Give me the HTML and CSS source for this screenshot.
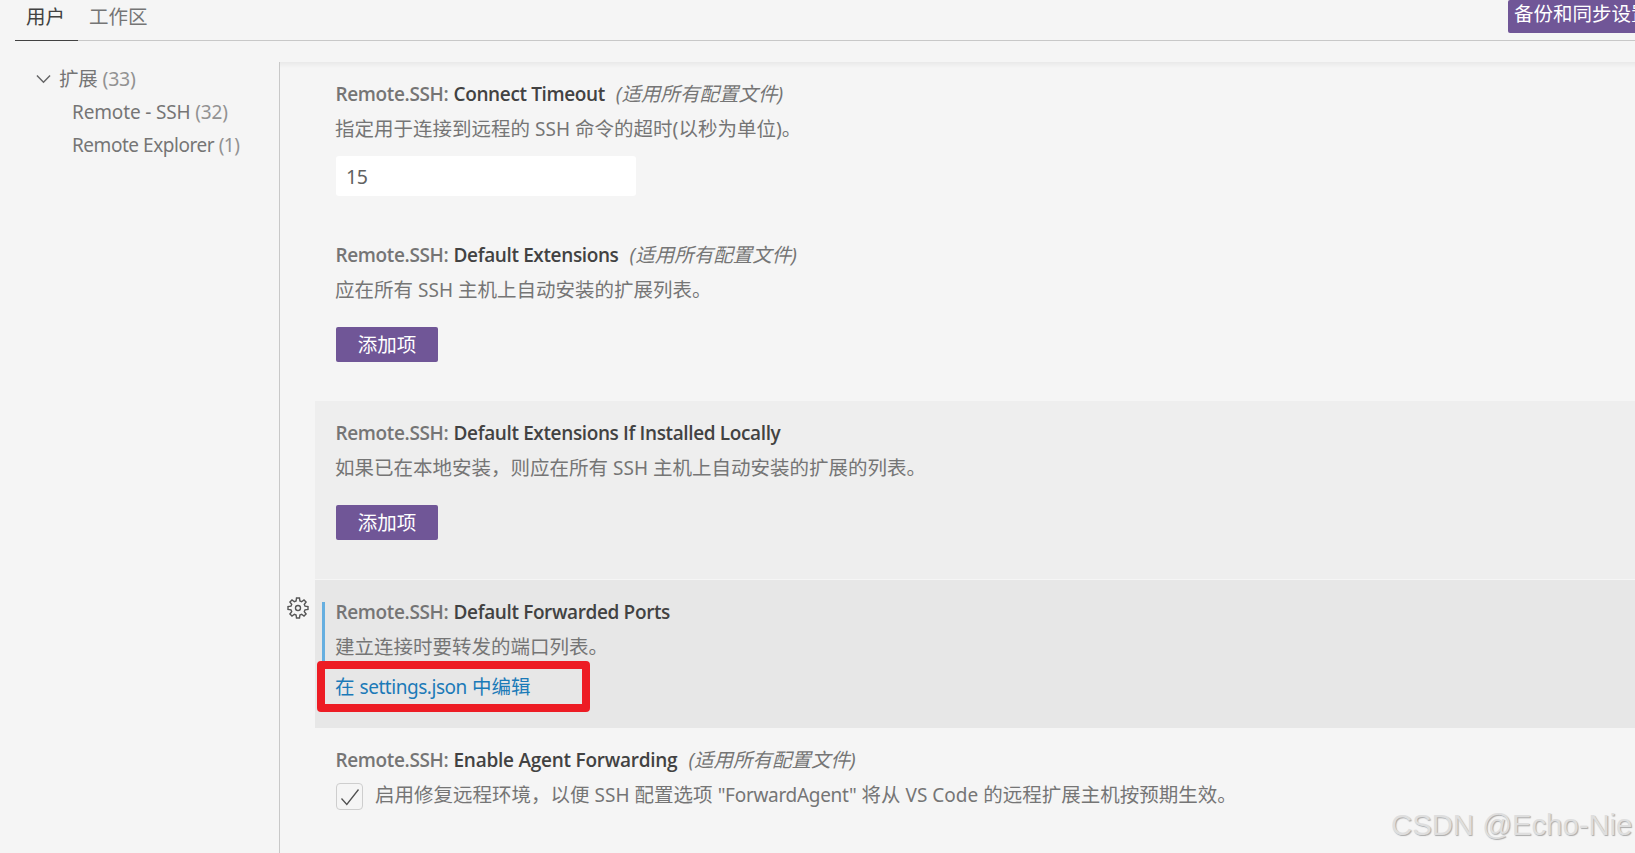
FILE: index.html
```html
<!DOCTYPE html>
<html lang="zh-CN">
<head>
<meta charset="utf-8">
<title>设置</title>
<link rel="stylesheet" href="styles.css">
</head>
<body>
<div class="settings">
  <header class="header">
    <nav class="tabs">
      <span class="tab active">用户</span>
      <span class="tab">工作区</span>
    </nav>
    <button class="button sync">备份和同步设置</button>
  </header>
  <div class="body">
    <aside class="toc">
      <div class="toc-row root">
        <svg class="chevron" viewBox="0 0 16 10"><path d="M1 1.2 8 8.4 15 1.2"/></svg>
        <span>扩展 <i class="count">(33)</i></span>
      </div>
      <div class="toc-row child"><span class="latin ssh">Remote - SSH <i class="count">(32)</i></span></div>
      <div class="toc-row child"><span class="latin tight">Remote Explorer <i class="count">(1)</i></span></div>
    </aside>
    <main class="list">
      <section class="item number">
        <h3 class="title"><span class="category">Remote.SSH:</span><span class="label">Connect Timeout</span><em class="scope">(适用所有配置文件)</em></h3>
        <p class="desc">指定用于连接到远程的 <span class="latin">SSH</span> 命令的超时(以秒为单位)。</p>
        <div class="input">15</div>
      </section>
      <section class="item array">
        <h3 class="title"><span class="category">Remote.SSH:</span><span class="label">Default Extensions</span><em class="scope">(适用所有配置文件)</em></h3>
        <p class="desc">应在所有 <span class="latin">SSH</span> 主机上自动安装的扩展列表。</p>
        <button class="button add">添加项</button>
      </section>
      <section class="item array hovered">
        <h3 class="title"><span class="category">Remote.SSH:</span><span class="label">Default Extensions If Installed Locally</span></h3>
        <p class="desc">如果已在本地安装，则应在所有 <span class="latin">SSH</span> 主机上自动安装的扩展的列表。</p>
        <button class="button add">添加项</button>
      </section>
      <section class="item complex focused">
        <svg class="gear" viewBox="-11 -11 22 22">
          <path d="M-1.9 -7 -1.5 -10H1.5L1.9 -7 3.6 -6.3 6 -8.1 8.1 -6 6.3 -3.6 7 -1.9 10 -1.5V1.5L7 1.9 6.3 3.6 8.1 6 6 8.1 3.6 6.3 1.9 7 1.5 10H-1.5L-1.9 7 -3.6 6.3 -6 8.1 -8.1 6 -6.3 3.6 -7 1.9 -10 1.5V-1.5L-7 -1.9 -6.3 -3.6 -8.1 -6 -6 -8.1 -3.6 -6.3Z"/>
          <circle r="2.5"/>
        </svg>
        <div class="modified"></div>
        <h3 class="title"><span class="category">Remote.SSH:</span><span class="label">Default Forwarded Ports</span></h3>
        <p class="desc">建立连接时要转发的端口列表。</p>
        <a class="link">在 <span class="latin tight">settings.json</span> 中编辑</a>
        <div class="marker"></div>
      </section>
      <section class="item bool">
        <h3 class="title"><span class="category">Remote.SSH:</span><span class="label wide">Enable Agent Forwarding</span><em class="scope">(适用所有配置文件)</em></h3>
        <div class="check-row">
          <span class="checkbox"><svg viewBox="0 0 20 20"><path d="M1.5 11.5 6.8 17.5 18.5 2.5"/></svg></span>
          <p class="desc">启用修复远程环境，以便 <span class="latin">SSH</span> 配置选项 <span class="latin snug">"ForwardAgent"</span> 将从 <span class="latin">VS Code</span> 的远程扩展主机按预期生效。</p>
        </div>
      </section>
    </main>
  </div>
  <div class="watermark">CSDN @Echo-Nie</div>
</div>
</body>
</html>
```
FILE: styles.css
```css
* { box-sizing: border-box; }

body {
  margin: 0;
  background: #f5f5f5;
  color: #757575;
  font: 19.5px/33px "Noto Sans", "Noto Sans CJK SC", sans-serif;
}

h3, p { margin: 0; font-weight: 400; font-size: inherit; }

.settings {
  position: relative;
  width: 100%;
  height: 853px;
  overflow: hidden;
  display: flex;
  flex-direction: column;
}

.header {
  flex: none;
  height: 41px;
  margin-left: 15px;
  border-bottom: 1px solid #c8c8c8;
  display: flex;
  justify-content: space-between;
  align-items: flex-start;
}

.tabs { display: flex; height: 41px; }
.tab { padding: 0 13px 0 11px; height: 41px; }
.tab.active { color: #424242; border-bottom: 1px solid #424242; }

.button {
  display: block;
  border: 0;
  border-radius: 2px;
  background: #705697;
  color: #fff;
  font: inherit;
  white-space: nowrap;
}
.sync { width: 151px; height: 33px; padding: 0 6px 6px; margin-right: -24px; text-align: left; line-height: 27px; }

.body { flex: 1; display: flex; margin-top: 21px; min-height: 0; }

.toc { width: 279px; flex: none; }
.toc-row { height: 33px; display: flex; align-items: center; white-space: pre; }
.toc-row.root { padding-left: 36px; gap: 8px; letter-spacing: -0.2px; }
.toc-row.child { padding: 2px 0 0 72px; }
.count { font-style: normal; color: #929292; }
.chevron { width: 15px; height: 10px; fill: none; stroke: #646465; stroke-width: 1.5; }

.list {
  flex: 1;
  min-width: 0;
  padding-left: 35px;
  border-left: 1px solid #c8c8c8;
  background: linear-gradient(#e9e9e9, #f5f5f5 6px);
}

.item { position: relative; padding: 15px 0 0 21px; }
.number { height: 161px; }
.array { height: 178px; }
.hovered { background: #eee; }
.complex { height: 148px; margin-top: 1px; }
.focused { background: #e7e7e7; }

.title { display: flex; height: 34px; line-height: 35px; white-space: nowrap; }
.category, .label { font-family: "Open Sans", sans-serif; font-weight: 600; font-size: 19px; letter-spacing: -0.37px; }
.category { width: 118px; margin-left: -0.5px; }
.label { color: #424242; margin-right: 11px; }
.label.wide { letter-spacing: -0.25px; }
.scope { margin-top: -1px; }
.desc { height: 36px; margin-left: -1px; line-height: 35px; white-space: nowrap; }
.latin { font-size: 19px; }
.latin.ssh { letter-spacing: -0.15px; }
.latin.tight { letter-spacing: -0.46px; }
.latin.snug { letter-spacing: -0.3px; }

.input {
  width: 300px;
  height: 40px;
  margin-top: 9px;
  padding-left: 10px;
  border-radius: 3px;
  background: #fff;
  line-height: 41px;
  letter-spacing: -0.5px;
  color: #616161;
}

.add { width: 102px; height: 35px; margin-top: 19px; padding: 0; text-align: center; line-height: 35px; }

.link { display: block; height: 36px; margin: 4px 0 0 -1px; line-height: 36px; color: #1b7ab8; white-space: nowrap; }

.gear { position: absolute; left: -28px; top: 17px; width: 22px; height: 22px; fill: none; stroke: #555; stroke-width: 1.4; }
.modified { position: absolute; left: 7px; top: 22px; width: 3px; height: 104px; background: #66afe0; }
.marker { position: absolute; left: 2px; top: 81px; width: 273px; height: 51px; border: 8px solid #ed1c24; border-radius: 4px; }

.check-row { display: flex; gap: 13px; }
.checkbox {
  width: 27px;
  height: 27px;
  margin-top: 6px;
  border: 1px solid #cecece;
  border-radius: 4px;
  display: flex;
  align-items: center;
  justify-content: center;
}
.checkbox svg { width: 20px; height: 20px; fill: none; stroke: #505050; stroke-width: 1.3; }

.watermark {
  position: absolute;
  left: 1391px;
  top: 805px;
  font: 29.3px/40px "Liberation Sans", sans-serif;
  color: #dedede;
  text-shadow: 1px 1px 1px #aaa;
  white-space: nowrap;
}
```
